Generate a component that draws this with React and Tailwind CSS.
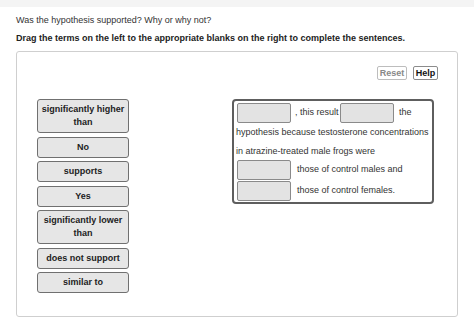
import React from 'react';

const terms = [
    { label: 'significantly higher than', tall: true },
    { label: 'No' },
    { label: 'supports' },
    { label: 'Yes' },
    { label: 'significantly lower than', tall: true },
    { label: 'does not support' },
    { label: 'similar to' },
];

const Blank = () => (
    <div className="w-[54px] h-[20px] shrink-0 bg-[#e3e3e3] border border-[#8a8a8a] rounded-[2px]" />
);

const App = () => {
    return (
        <div className="w-[474px] h-[321px] bg-white overflow-hidden text-[#222]" style={{ fontFamily: '"Liberation Sans", Arial, sans-serif' }}>
            <div className="h-[7px] bg-[#f4f4f4]" />

            <p className="mt-[7px] pl-[16px] text-[9px] leading-[12px] text-[#333]">Was the hypothesis supported? Why or why not?</p>
            <p className="mt-[6px] pl-[16px] text-[9px] leading-[12px] font-bold text-[#222]">
                Drag the terms on the left to the appropriate blanks on the right to complete the sentences.
            </p>

            <div className="mt-[7px] ml-[16px] w-[442px] h-[266px] border border-[#cfcfcf] rounded-[3px]">
                <div className="flex justify-end gap-[6px] pt-[14px] pr-[19px]">
                    <button className="w-[30px] h-[14px] border border-[#bdbdbd] rounded-[2px] text-[9px] font-bold leading-none text-[#888]">Reset</button>
                    <button className="w-[25px] h-[14px] border border-[#8c8c8c] rounded-[2px] text-[9px] font-bold leading-none text-[#111]">Help</button>
                </div>

                <div className="flex mt-[19px] pl-[20px]">
                    <div className="w-[92px] flex flex-col gap-[3.5px]">
                        {terms.map((t) => (
                            <div
                                key={t.label}
                                className={`${t.tall ? 'h-[34px]' : 'h-[21px]'} flex items-center justify-center text-center bg-[#e6e6e6] border border-[#707070] rounded-[3px] text-[9px] font-bold leading-[13px] text-[#222]`}
                            >
                                {t.label}
                            </div>
                        ))}
                    </div>

                    <div className="ml-[103px] w-[202px] h-[105px] border-2 border-[#5e5e5e] rounded-[4px] px-[2px] pt-[2px] text-[9px] text-[#333]">
                        <div className="flex items-center ml-[1px]">
                            <Blank />
                            <span className="w-[49px] pl-[4px] whitespace-nowrap">, this result</span>
                            <Blank />
                            <span className="pl-[5px]">the</span>
                        </div>
                        <p className="leading-[18.5px] whitespace-nowrap">hypothesis because testosterone concentrations</p>
                        <p className="leading-[18px] whitespace-nowrap">in atrazine-treated male frogs were</p>
                        <div className="flex items-center ml-[1px]">
                            <Blank />
                            <span className="pl-[6px]">those of control males and</span>
                        </div>
                        <div className="flex items-center ml-[1px] mt-[1px]">
                            <Blank />
                            <span className="pl-[6px]">those of control females.</span>
                        </div>
                    </div>
                </div>
            </div>
        </div>
    );
};

export default App;
